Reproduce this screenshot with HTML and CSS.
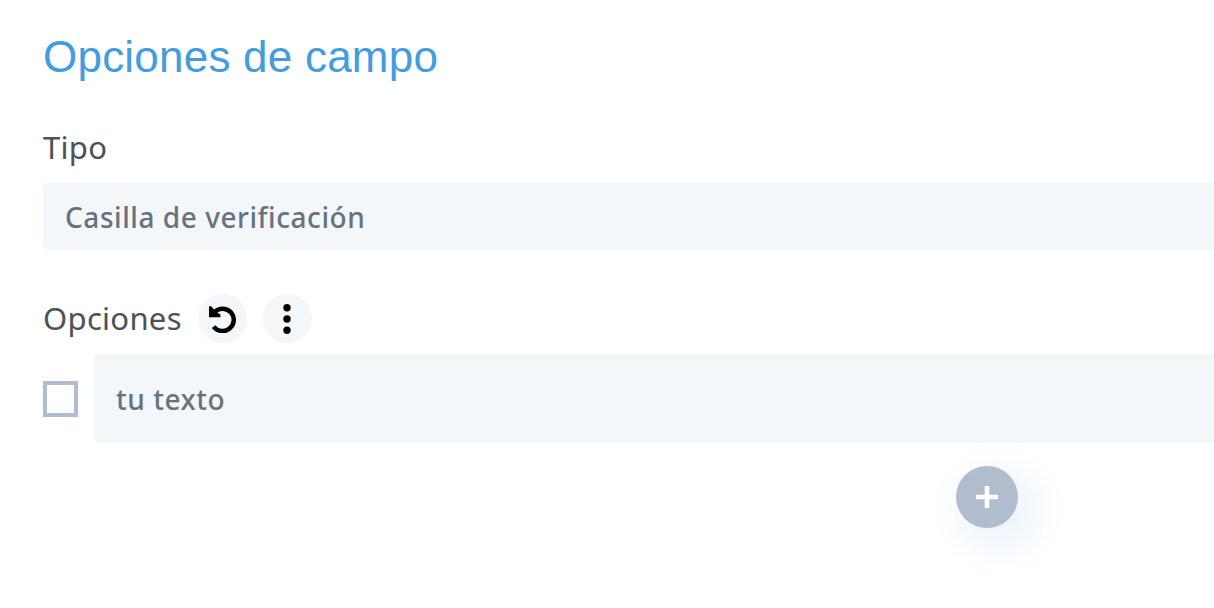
FILE: index.html
```html
<!DOCTYPE html>
<html lang="es">
<head>
  <meta charset="UTF-8" />
  <meta name="viewport" content="width=device-width, initial-scale=1.0"/>
  <title>Opciones de campo</title>
  <link rel="stylesheet" href="styles.css">
</head>
<body>
  <div class="panel">
    <h2>Opciones de campo</h2>

    <div class="label">Tipo</div>
    <div class="field">Casilla de verificación</div>

    <div class="label label-options">
      <span>Opciones</span>
      <button class="icon-btn" aria-label="Restablecer">
        <svg width="28" height="28" viewBox="0 0 28 28">
          <path d="M7 6.6 A11.2 11.2 0 1 1 5.6 21.6" fill="none" stroke="#000" stroke-width="4.5"/>
          <path d="M1 1.2 H3.2 L6 4.6 L9 7.4 L12.4 9.4 V12.2 H1 Z"/>
        </svg>
      </button>
      <button class="icon-btn" aria-label="Más">
        <svg width="8" height="30" viewBox="0 0 8 30">
          <circle cx="4" cy="3.8" r="3.7"/>
          <circle cx="4" cy="15" r="3.7"/>
          <circle cx="4" cy="26.2" r="3.7"/>
        </svg>
      </button>
    </div>

    <div class="option">
      <span class="checkbox"></span>
      <div class="field option-text">tu texto</div>
    </div>

    <button class="add-btn" aria-label="Añadir">
      <svg width="22" height="22" viewBox="0 0 22 22">
        <path d="M11 0 V22 M0 11 H22" stroke="#fff" stroke-width="4.6"/>
      </svg>
    </button>
  </div>
</body>
</html>
```
FILE: styles.css
```css
:root {
  --blue: #419de0;
  --field-bg: #f3f7fa;
  --grey: #b1bdcf;
}

* {
  box-sizing: border-box;
}

body {
  margin: 0;
  background: #fff;
  font-family: 'Noto Sans', sans-serif;
}

button {
  border: none;
  padding: 0;
  display: flex;
  align-items: center;
  justify-content: center;
}

.panel {
  min-height: 100vh;
  padding: 32px 0 0 43px;
}

h2 {
  margin: 0;
  font-family: 'Liberation Sans', sans-serif;
  font-size: 44px;
  font-weight: 400;
  line-height: 50px;
  letter-spacing: 0.22px;
  color: var(--blue);
}

.label {
  margin-top: 46px;
  height: 40px;
  line-height: 38px;
  font-size: 31px;
  letter-spacing: 0.3px;
  color: #4c5257;
}

.field {
  margin-top: 15px;
  height: 67px;
  padding-left: 22px;
  line-height: 69px;
  font-size: 28px;
  font-weight: 500;
  letter-spacing: 0.55px;
  color: #66737f;
  background: var(--field-bg);
  border-radius: 5px 0 0 5px;
}

.label-options {
  display: flex;
  align-items: center;
  height: 49px;
  margin-top: 44px;
}

.label-options span {
  padding-bottom: 2px;
}

.icon-btn {
  width: 49px;
  height: 49px;
  margin-left: 16px;
  border-radius: 50%;
  background: var(--field-bg);
}

.option {
  display: flex;
  align-items: center;
  margin-top: 11px;
}

.checkbox {
  width: 35px;
  height: 36px;
  border: 4px solid var(--grey);
}

.option-text {
  flex: 1;
  height: 89px;
  margin: 0 0 0 16px;
  line-height: 91px;
}

.add-btn {
  width: 62px;
  height: 62px;
  margin: 23px 0 0 913px;
  border-radius: 50%;
  background: var(--grey);
  box-shadow: 12px 12px 50px #dcebfa;
}
```
